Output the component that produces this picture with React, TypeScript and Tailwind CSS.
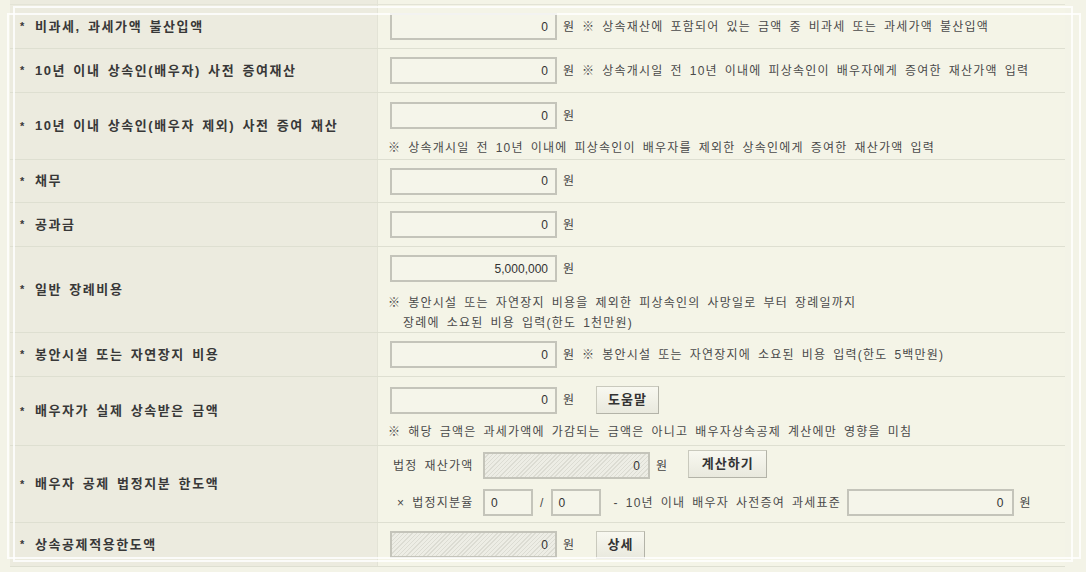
import React from 'react';

const font = "font-['Liberation_Sans','Noto_Sans_CJK_KR',sans-serif]";

function Money({ value = '0', hatched = false, w = 'w-[167px]' }: { value?: string; hatched?: boolean; w?: string }) {
  return (
    <div
      className={`${w} h-[27px] border-2 border-[#c4c4ba] flex items-center justify-end pr-[7px] text-[12px] text-[#333] ${
        hatched
          ? 'bg-[repeating-linear-gradient(135deg,#ededE5_0px,#ededE5_2px,#dcdcd3_2px,#dcdcd3_3px)]'
          : 'bg-[#f5f5ea]'
      }`}
    >
      {value}
    </div>
  );
}

function Btn({ children, w }: { children: React.ReactNode; w: string }) {
  return (
    <div
      className={`${w} h-[28px] flex items-center justify-center border border-[#c9c9bd] border-b-[#b3b3a8] border-r-[#b3b3a8] bg-gradient-to-b from-[#f8f8f0] to-[#e9e9de] text-[13px] font-bold tracking-[1px] text-[#333]`}
    >
      {children}
    </div>
  );
}

function Won() {
  return <span className="ml-[6px] text-[12px] text-[#444]">원</span>;
}

function Note({ children, className = '' }: { children: React.ReactNode; className?: string }) {
  return (
    <span className={`text-[12px] tracking-[1.2px] [word-spacing:2.5px] text-[#4a4a4a] ${className}`}>{children}</span>
  );
}

function Row({ label, h, children }: { label: string; h: string; children: React.ReactNode }) {
  return (
    <div className={`flex ${h} border-b border-[#dedfd1]`}>
      <div className="w-[368px] shrink-0 bg-[#ecebdf] border-r border-[#e3e3d6] flex items-center pl-[10px] text-[13px] font-bold tracking-[1.6px] [word-spacing:2px] text-[#383838]">
        <span className="mr-[9px] text-[11px]">*</span>
        {label}
      </div>
      <div className="flex-1 pl-[12px]">{children}</div>
    </div>
  );
}

export default function App() {
  return (
    <div className={`relative w-[1086px] h-[572px] overflow-hidden bg-[#f3f3e7] ${font}`}>
      <div className="ml-[10px] w-[1055px] bg-[#f4f4e7]">
        {/* spacer above first row */}
        <div className="flex h-[5px] border-b border-[#e3e3d6]">
          <div className="w-[368px] bg-[#ecebdf] border-r border-[#e3e3d6]" />
          <div className="flex-1" />
        </div>

        <Row label="비과세, 과세가액 불산입액" h="h-[44px]">
          <div className="flex items-center h-full">
            <Money />
            <Won />
            <Note className="ml-[8px]">※ 상속재산에 포함되어 있는 금액 중 비과세 또는 과세가액 불산입액</Note>
          </div>
        </Row>

        <Row label="10년 이내 상속인(배우자) 사전 증여재산" h="h-[44px]">
          <div className="flex items-center h-full">
            <Money />
            <Won />
            <Note className="ml-[8px]">※ 상속개시일 전 10년 이내에 피상속인이 배우자에게 증여한 재산가액 입력</Note>
          </div>
        </Row>

        <Row label="10년 이내 상속인(배우자 제외) 사전 증여 재산" h="h-[67px]">
          <div className="flex flex-col pt-[9px]">
            <div className="flex items-center">
              <Money />
              <Won />
            </div>
            <Note className="mt-[10px] -ml-[2px]">※ 상속개시일 전 10년 이내에 피상속인이 배우자를 제외한 상속인에게 증여한 재산가액 입력</Note>
          </div>
        </Row>

        <Row label="채무" h="h-[43px]">
          <div className="flex items-center h-full">
            <Money />
            <Won />
          </div>
        </Row>

        <Row label="공과금" h="h-[44px]">
          <div className="flex items-center h-full">
            <Money />
            <Won />
          </div>
        </Row>

        <Row label="일반 장례비용" h="h-[86px]">
          <div className="flex flex-col pt-[8px]">
            <div className="flex items-center">
              <Money value="5,000,000" />
              <Won />
            </div>
            <Note className="mt-[11px] -ml-[2px] leading-[20px]">
              ※ 봉안시설 또는 자연장지 비용을 제외한 피상속인의 사망일로 부터 장례일까지
              <br />
              <span className="pl-[15px]">장례에 소요된 비용 입력(한도 1천만원)</span>
            </Note>
          </div>
        </Row>

        <Row label="봉안시설 또는 자연장지 비용" h="h-[44px]">
          <div className="flex items-center h-full">
            <Money />
            <Won />
            <Note className="ml-[8px]">※ 봉안시설 또는 자연장지에 소요된 비용 입력(한도 5백만원)</Note>
          </div>
        </Row>

        <Row label="배우자가 실제 상속받은 금액" h="h-[69px]">
          <div className="flex flex-col pt-[9px]">
            <div className="flex items-center">
              <Money />
              <Won />
              <div className="ml-[22px]">
                <Btn w="w-[63px]">도움말</Btn>
              </div>
            </div>
            <Note className="mt-[9px] -ml-[2px]">※ 해당 금액은 과세가액에 가감되는 금액은 아니고 배우자상속공제 계산에만 영향을 미침</Note>
          </div>
        </Row>

        <Row label="배우자 공제 법정지분 한도액" h="h-[77px]">
          <div className="flex flex-col pt-[6px] gap-[10px] text-[12px] tracking-[1.2px] [word-spacing:2.5px] text-[#4a4a4a]">
            <div className="flex items-center">
              <span className="w-[93px] pl-[3px]">법정 재산가액</span>
              <Money hatched />
              <Won />
              <div className="ml-[20px] -mt-[4px]">
                <Btn w="w-[79px]">계산하기</Btn>
              </div>
            </div>
            <div className="flex items-center">
              <span className="w-[93px] pl-[7px]">× 법정지분율</span>
              <div className="w-[50px] h-[27px] border-2 border-[#c4c4ba] bg-[#f5f5ea] flex items-center pl-[6px] text-[#333]">0</div>
              <span className="ml-[7px] mr-[6px]">/</span>
              <div className="w-[50px] h-[27px] border-2 border-[#c4c4ba] bg-[#f5f5ea] flex items-center pl-[6px] text-[#333]">0</div>
              <span className="ml-[13px] w-[233px] whitespace-nowrap">- 10년 이내 배우자 사전증여 과세표준</span>
              <Money />
              <Won />
            </div>
          </div>
        </Row>

        <Row label="상속공제적용한도액" h="h-[44px]">
          <div className="flex items-center h-full">
            <Money hatched />
            <Won />
            <div className="ml-[22px]">
              <Btn w="w-[49px]">상세</Btn>
            </div>
          </div>
        </Row>
      </div>

      {/* faint double outline lying over the table */}
      <div className="absolute left-[13px] top-[6px] w-[1060px] h-[556px] border-2 border-white/80 pointer-events-none" />
      <div className="absolute left-[7px] top-[13px] w-[1074px] h-[546px] border-2 border-white/80 pointer-events-none" />
    </div>
  );
}
